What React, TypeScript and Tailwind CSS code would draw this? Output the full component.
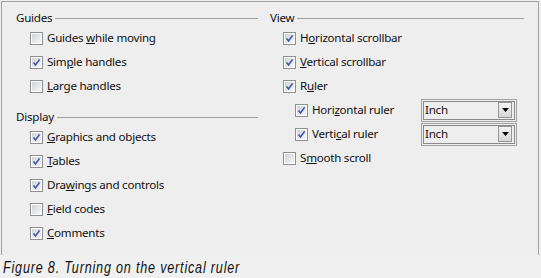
import React from "react";

function Box({ checked }: { checked?: boolean }) {
  return (
    <span className="w-[13px] h-[13px] border border-[#8e8f8f] bg-white p-px flex shrink-0">
      <span className="flex-1 bg-linear-to-br from-[#d0d3d8] to-[#f7f7f7] flex items-center justify-center">
        {checked && (
          <svg width="9" height="9" viewBox="0 0 9 9">
            <path d="M1.5 4.6 L3.5 7 L7.6 1.4" stroke="#3b54a8" strokeWidth="1.6" fill="none" />
          </svg>
        )}
      </span>
    </span>
  );
}

function Item({
  checked,
  pre,
  u,
  post,
  indent,
}: {
  checked?: boolean;
  pre: string;
  u: string;
  post: string;
  indent: string;
}) {
  return (
    <div className={`h-6 flex items-center gap-[4px] ${indent}`}>
      <Box checked={checked} />
      <span className="whitespace-pre">
        {pre}
        <u>{u}</u>
        {post}
      </span>
    </div>
  );
}

function Heading({ title }: { title: string }) {
  return (
    <div className="h-4 flex items-center gap-[3px]">
      <span>{title}</span>
      <span className="flex-1 h-px bg-[#a0a0a0] mt-[1px]" />
    </div>
  );
}

function Dropdown() {
  return (
    <div className="w-[96px] h-[23px] border border-[#a2a2a2] p-px flex">
      <div className="flex-1 border border-[#8a8a8a] flex items-center pl-px">
        <span>Inch</span>
        <span className="ml-auto mr-[2px] w-[14px] h-[16px] border border-[#979797] bg-linear-to-b from-[#f4f4f4] to-[#d6d6d6] flex items-center justify-center">
          <svg width="7" height="4" viewBox="0 0 7 4">
            <path d="M0 0 H7 L3.5 4 Z" fill="#000" />
          </svg>
        </span>
      </div>
    </div>
  );
}

function SubItem({ pre, u, post }: { pre: string; u: string; post: string }) {
  return (
    <div className="h-6 flex items-center pl-[25px]">
      <div className="w-[126px] flex items-center gap-[4px]">
        <Box checked />
        <span className="whitespace-pre">
          {pre}
          <u>{u}</u>
          {post}
        </span>
      </div>
      <Dropdown />
    </div>
  );
}

export default function App() {
  return (
    <div
      className="w-[541px] h-[278px] bg-[#f0f0f0] text-[11.6px] tracking-[-0.25px] text-[#111] overflow-hidden"
      style={{ fontFamily: '"Noto Sans", "Open Sans", sans-serif' }}
    >
      <div className="ml-px mt-px w-[538px] h-[254px] border-l border-t border-r border-[#a0a0a0] bg-[#eeeeee] flex pt-[8px] leading-none">
        <div className="ml-[14px] w-[242px] flex flex-col">
          <Heading title="Guides" />
          <Item indent="pl-[14px]" pre="Guides " u="w" post="hile moving" />
          <Item indent="pl-[14px]" checked pre="Sim" u="p" post="le handles" />
          <Item indent="pl-[14px]" pre="" u="L" post="arge handles" />
          <div className="mt-[11px]">
            <Heading title="Display" />
          </div>
          <Item indent="pl-[14px]" checked pre="" u="G" post="raphics and objects" />
          <Item indent="pl-[14px]" checked pre="" u="T" post="ables" />
          <Item indent="pl-[14px]" checked pre="Dra" u="w" post="ings and controls" />
          <Item indent="pl-[14px]" pre="" u="F" post="ield codes" />
          <Item indent="pl-[14px]" checked pre="" u="C" post="omments" />
        </div>
        <div className="ml-[12px] w-[254px] flex flex-col">
          <Heading title="View" />
          <Item indent="pl-[13px]" checked pre="H" u="o" post="rizontal scrollbar" />
          <Item indent="pl-[13px]" checked pre="" u="V" post="ertical scrollbar" />
          <Item indent="pl-[13px]" checked pre="R" u="u" post="ler" />
          <SubItem pre="Hori" u="z" post="ontal ruler" />
          <SubItem pre="Verti" u="c" post="al ruler" />
          <Item indent="pl-[13px]" pre="S" u="m" post="ooth scroll" />
        </div>
      </div>
      <div
        className="mt-[2px] ml-[3px] italic text-[17px] leading-[21px] tracking-[1.1px] text-[#111] origin-left scale-x-[0.74] whitespace-nowrap"
        style={{ fontFamily: '"Liberation Sans", Arial, sans-serif' }}
      >
        Figure 8. Turning on the vertical ruler
      </div>
    </div>
  );
}
